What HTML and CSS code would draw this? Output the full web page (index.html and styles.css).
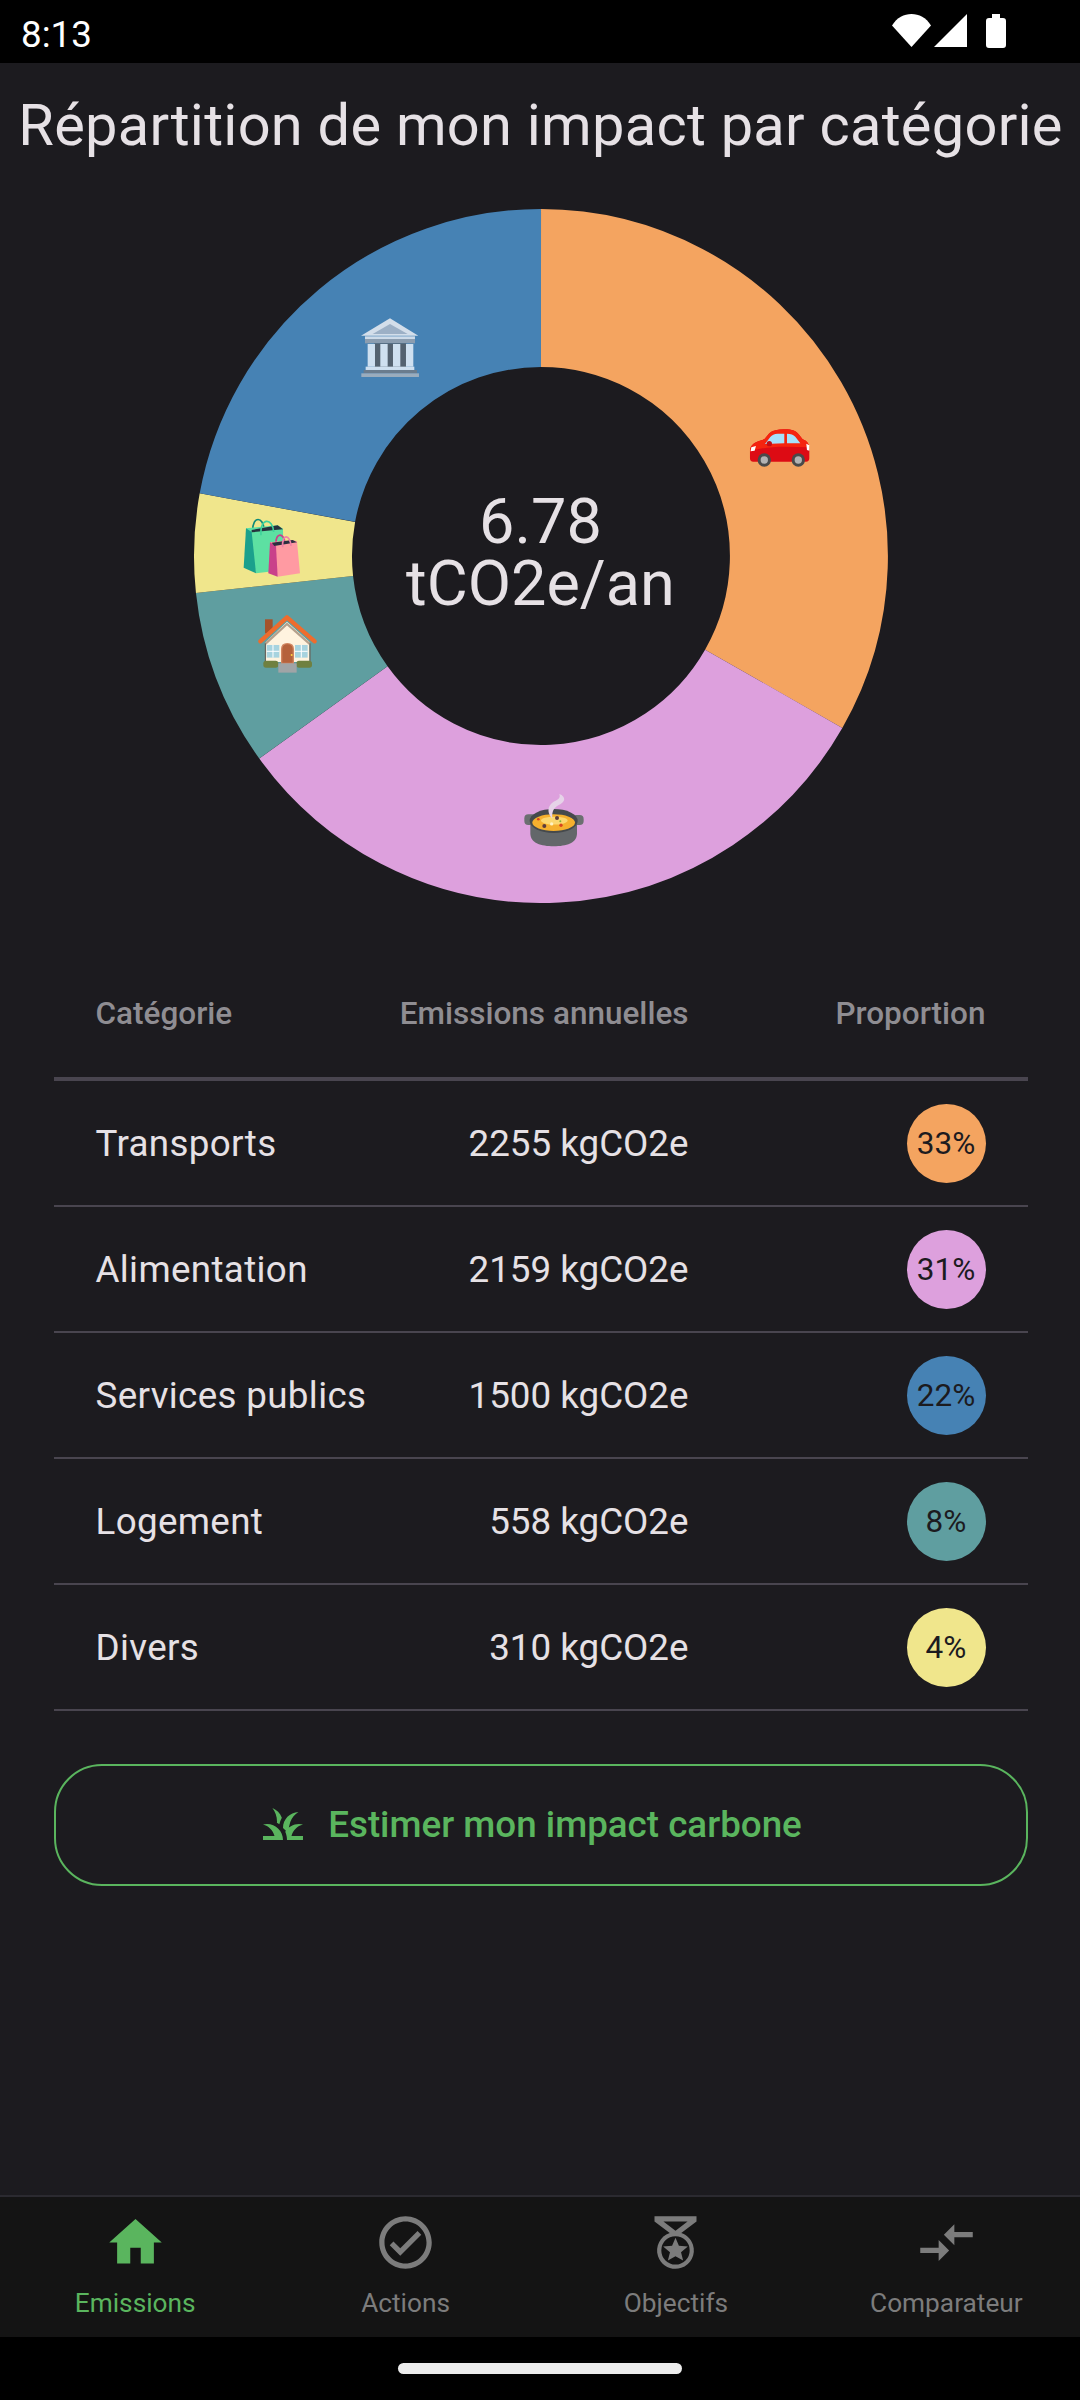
FILE: index.html
```html
<!DOCTYPE html>
<html lang="fr">
<head>
    <meta charset="UTF-8">
    <meta name="viewport" content="width=device-width, initial-scale=1.0">
    <title>Répartition de mon impact</title>
    <link rel="stylesheet" href="styles.css">
</head>
<body>
    <div class="status-bar">
        <span class="status-time">8:13</span>
        <div class="status-icons">
            <svg class="icon-wifi" width="39" height="33" viewBox="0 0 39 33"><path d="M0 11.5C5 3.5 12 0 19.5 0S34 3.5 39 11.5L19.5 33Z"/></svg>
            <svg class="icon-signal" width="33" height="33" viewBox="0 0 33 33"><path d="M33 0V33H0Z"/></svg>
            <svg class="icon-battery" width="20" height="34" viewBox="0 0 20 34"><path d="M6 0H14V4H17Q20 4 20 7V31Q20 34 17 34H3Q0 34 0 31V7Q0 4 3 4H6Z"/></svg>
        </div>
    </div>

    <main class="content">
        <h1 class="page-title">Répartition de mon impact par catégorie</h1>

        <div class="donut">
            <svg width="696" height="696" viewBox="0 0 696 696">
                <!-- une portion = un arc épais, du haut dans le sens horaire -->
                <g fill="none" stroke-width="158">
                    <path stroke="#f4a460" d="M348 80A268 268 0 0 1 580.7 480.8"/>
                    <path stroke="#dda0dd" d="M580.7 480.8A268 268 0 0 1 130.4 504.4"/>
                    <path stroke="#5f9ea0" d="M130.4 504.4A268 268 0 0 1 81.5 376.5"/>
                    <path stroke="#f0e68c" d="M81.5 376.5A268 268 0 0 1 84.4 299.6"/>
                    <path stroke="#4682b4" d="M84.4 299.6A268 268 0 0 1 348 80"/>
                </g>

                <!-- voiture -->
                <g transform="translate(298 192) scale(.3333)">
                    <path fill="#dd0b14" d="M777 150C778 135 790 125 820 118L835 100C845 91 860 88 880 88C905 88 915 92 925 105L935 118C950 122 955 135 955 150V175Q955 185 945 185H787Q777 185 777 175Z"/>
                    <path fill="#f5240f" d="M777 155C778 135 790 125 820 118L835 100C845 91 860 88 880 88C905 88 915 92 925 105L935 118C950 122 955 135 955 142L880 140C840 140 800 145 777 155Z"/>
                    <path fill="#a6e1fb" d="M822 132L838 111Q845 102 860 101H880V130ZM888 101Q905 101 913 110L928 130H888Z"/>
                    <circle cx="835" cy="131" r="8" fill="#c40d14"/>
                    <path fill="#fff" d="M781 142L795 138L791 152L779 154ZM946 131L955 136V152L948 150Z"/>
                    <circle cx="820" cy="180" r="20" fill="#4a4a4a"/>
                    <circle cx="820" cy="180" r="11" fill="#b3b3b3"/>
                    <circle cx="922" cy="180" r="20" fill="#4a4a4a"/>
                    <circle cx="922" cy="180" r="11" fill="#b3b3b3"/>
                </g>

                <!-- marmite -->
                <g transform="translate(298 192) scale(.3333)">
                    <rect x="100" y="1243" width="34" height="32" rx="12" fill="#6b6f70"/>
                    <rect x="244" y="1245" width="34" height="30" rx="12" fill="#6b6f70"/>
                    <path fill="#63676a" d="M118 1260V1300C118 1330 150 1339 188 1339S258 1330 258 1300V1260Z"/>
                    <ellipse cx="188" cy="1263" rx="72" ry="36" fill="#45494c"/>
                    <ellipse cx="188" cy="1268" rx="64" ry="25" fill="#f5b02e"/>
                    <ellipse cx="190" cy="1262" rx="40" ry="12" fill="#fbd870"/>
                    <circle cx="160" cy="1278" r="6" fill="#5b3b3b"/>
                    <circle cx="198" cy="1254" r="6" fill="#5b3b3b"/>
                    <circle cx="142" cy="1258" r="4" fill="#d8431f"/>
                    <circle cx="210" cy="1276" r="5" fill="#d8431f"/>
                    <circle cx="182" cy="1272" r="5" fill="#fff3c4"/>
                    <circle cx="208" cy="1264" r="3" fill="#7fb03c"/>
                    <path fill="#e6d3e8" d="M205 1182C226 1190 224 1206 202 1216C188 1223 182 1236 184 1256C171 1242 168 1226 180 1212C190 1200 212 1200 205 1182Z"/>
                </g>

                <!-- bâtiment public -->
                <g transform="translate(28 92) scale(.3333)">
                    <path fill="#d3deea" d="M507 55L592 107H420Z"/>
                    <path fill="#9cb0c6" d="M507 72L560 102H455Z"/>
                    <rect x="432" y="109" width="150" height="8" fill="#cddbe9"/>
                    <rect x="432" y="117" width="150" height="13" fill="#8b9db0"/>
                    <rect x="460" y="130" width="96" height="72" fill="#546270"/>
                    <rect x="440" y="132" width="22" height="68" fill="#cfe0f0"/>
                    <rect x="478" y="132" width="22" height="68" fill="#cfe0f0"/>
                    <rect x="516" y="132" width="22" height="68" fill="#cfe0f0"/>
                    <rect x="555" y="132" width="22" height="68" fill="#cfe0f0"/>
                    <rect x="434" y="200" width="146" height="10" fill="#cfe0f0"/>
                    <rect x="428" y="210" width="160" height="10" fill="#6a7c8e"/>
                    <rect x="421" y="220" width="173" height="11" fill="#9aacbd"/>
                </g>

                <!-- sacs -->
                <g transform="translate(28 92) scale(.3333)">
                    <path fill="none" stroke="#0e8a78" stroke-width="5" d="M95 692C95 646 127 650 129 688"/>
                    <path fill="#5de0a2" d="M75 685L170 676L186 686L188 810L105 820Z"/>
                    <path fill="#1ba08c" d="M75 685L92 696L105 820L68 803Z"/>
                    <path fill="#26333f" d="M92 690L170 676L186 688L92 697Z"/>
                    <path fill="none" stroke="#3fd39c" stroke-width="5" d="M120 706C116 650 156 654 158 696"/>
                    <path fill="none" stroke="#c9418a" stroke-width="5" d="M165 732C163 695 190 700 192 728"/>
                    <path fill="#ff9aa2" d="M147 727L215 720L228 724L237 820L170 830Z"/>
                    <path fill="#c9418a" d="M147 727L165 738L170 830L142 820Z"/>
                    <path fill="#2d2f40" d="M152 728L215 720L228 727L160 738Z"/>
                    <path fill="none" stroke="#f080a8" stroke-width="5" d="M185 742C182 698 208 704 210 738"/>
                </g>

                <!-- maison -->
                <g transform="translate(28 92) scale(.3333)">
                    <rect x="132" y="958" width="23" height="42" fill="#a5522a"/>
                    <path fill="#fff3df" d="M135 1025L198 965L265 1025V1086H135Z"/>
                    <path fill="none" stroke="#b5a08c" stroke-width="7" d="M133 1032L198 972L266 1032"/>
                    <path fill="none" stroke="#ee6c2d" stroke-width="13" stroke-linecap="round" stroke-linejoin="round" d="M118 1024L198 952L281 1024"/>
                    <path fill="none" stroke="#6a5a50" stroke-width="3" d="M133 1030V1086M267 1030V1086"/>
                    <rect x="137" y="1035" width="38" height="38" fill="#a7d3df"/>
                    <rect x="222" y="1035" width="38" height="38" fill="#a7d3df"/>
                    <path stroke="#fff" stroke-width="3" d="M156 1035V1073M137 1054H175M241 1035V1073M222 1054H260"/>
                    <path fill="#b5623c" stroke="#d18560" stroke-width="4" d="M182 1090V1048Q182 1031 199 1031Q217 1031 217 1048V1090Z"/>
                    <circle cx="212" cy="1065" r="3" fill="#ffd23f"/>
                    <rect x="127" y="1082" width="45" height="21" rx="8" fill="#6f8040"/>
                    <rect x="226" y="1082" width="47" height="21" rx="8" fill="#6f8040"/>
                    <rect x="172" y="1090" width="55" height="28" fill="#a0a4a6"/>
                </g>
            </svg>
            <div class="donut-label">6.78<br>tCO2e/an</div>
        </div>

        <div class="table">
            <div class="table-row table-head">
                <span>Catégorie</span>
                <span class="col-value">Emissions annuelles</span>
                <span class="col-share">Proportion</span>
            </div>
            <div class="table-row">
                <span class="col-name">Transports</span>
                <span class="col-value">2255 kgCO2e</span>
                <span class="col-share"><span class="badge badge-orange">33%</span></span>
            </div>
            <div class="table-row">
                <span class="col-name">Alimentation</span>
                <span class="col-value">2159 kgCO2e</span>
                <span class="col-share"><span class="badge badge-plum">31%</span></span>
            </div>
            <div class="table-row">
                <span class="col-name">Services publics</span>
                <span class="col-value">1500 kgCO2e</span>
                <span class="col-share"><span class="badge badge-blue">22%</span></span>
            </div>
            <div class="table-row">
                <span class="col-name">Logement</span>
                <span class="col-value">558 kgCO2e</span>
                <span class="col-share"><span class="badge badge-teal">8%</span></span>
            </div>
            <div class="table-row">
                <span class="col-name">Divers</span>
                <span class="col-value">310 kgCO2e</span>
                <span class="col-share"><span class="badge badge-yellow">4%</span></span>
            </div>
        </div>

        <button class="estimate-button">
            <svg width="48" height="48" viewBox="0 0 24 24" fill="currentColor"><path d="M12 20H2v-2h5.75C7.02 15.19 4.81 12.99 2 12.26 2.64 12.1 3.31 12 4 12c4.42 0 8 3.58 8 8zM22 12.26C21.36 12.1 20.69 12 20 12c-2.93 0-5.48 1.58-6.88 3.93.29.66.53 1.35.67 2.07.13.65.2 1.32.2 2h8v-2h-5.75c.73-2.81 2.94-5.01 5.75-5.74zM15.64 11.02c.78-2.09 2.23-3.84 4.09-5C15.44 6.16 12 9.67 12 14v.02c.95.75 1.77 1.66 2.4 2.69.28-2.02.69-3.91 1.24-5.69zM11.42 8.85C10.58 6.66 8.88 4.89 6.7 4 8.14 5.86 9 8.18 9 10.71c0 .21-.03.41-.04.61.43.24.83.52 1.22.82.21-1.18.65-2.29 1.24-3.29z"/></svg>
            <span>Estimer mon impact carbone</span>
        </button>
    </main>

    <nav class="bottom-nav">
        <div class="nav-item is-active">
            <svg width="63" height="63" viewBox="0 0 24 24" fill="currentColor"><path d="M10 20v-6h4v6h5v-8h3L12 3 2 12h3v8z"/></svg>
            <span>Emissions</span>
        </div>
        <div class="nav-item">
            <svg width="63" height="63" viewBox="0 0 24 24" fill="currentColor"><path d="M12 2C6.48 2 2 6.48 2 12s4.48 10 10 10 10-4.48 10-10S17.52 2 12 2zm0 18c-4.41 0-8-3.59-8-8s3.59-8 8-8 8 3.59 8 8-3.59 8-8 8zm-2-5.83L7.41 11.6 6 13l4 4 8-8-1.41-1.41z"/></svg>
            <span>Actions</span>
        </div>
        <div class="nav-item">
            <svg width="63" height="63" viewBox="0 0 24 24" fill="currentColor"><path fill-rule="evenodd" d="M20 2H4V4L9.81 8.36C6.14 9.57 4.14 13.53 5.35 17.2C6.56 20.87 10.5 22.87 14.19 21.66C17.86 20.45 19.86 16.5 18.65 12.82C17.95 10.71 16.3 9.05 14.19 8.36L20 4ZM7.4 4H16.6L12 7.5ZM12 9.6A5.4 5.4 0 1 0 12 20.4A5.4 5.4 0 1 0 12 9.6Z"/><path d="M14.9 18.9L12 17.2 9.1 18.9 9.9 15.7 7.3 13.5 10.7 13.2 12 10.2 13.3 13.2 16.7 13.5 14.1 15.7Z"/></svg>
            <span>Objectifs</span>
        </div>
        <div class="nav-item">
            <svg width="63" height="63" viewBox="0 0 24 24" fill="currentColor"><path d="M9.01 14H2v2h7.01v3L13 15l-3.99-4v3zm5.98-1v-3H22V8h-7.01V5L11 9l3.99 4z"/></svg>
            <span>Comparateur</span>
        </div>
    </nav>

    <div class="gesture-bar">
        <div class="gesture-pill"></div>
    </div>
</body>
</html>
```

FILE: styles.css
```css
* {
    box-sizing: border-box;
}

body {
    font-family: Roboto, "Noto Sans", sans-serif;
    display: flex;
    flex-direction: column;
    width: 1080px;
    height: 2400px;
    margin: 0;
    background-color: #1c1b1f;
    color: #e6e1e5;
}

.status-bar {
    display: flex;
    justify-content: space-between;
    align-items: flex-start;
    height: 63px;
    padding: 14px 74px 0 21px;
    background-color: #000;
    color: #fff;
}

.status-time {
    font-size: 36.75px;
    line-height: 41px;
}

.status-icons {
    display: flex;
    align-items: flex-start;
}

.status-icons svg {
    display: block;
    fill: #fff;
}

.icon-signal {
    margin-left: 3px;
}

.icon-battery {
    margin-left: 19px;
}

.content {
    flex: 1;
    display: flex;
    flex-direction: column;
    align-items: center;
    padding-left: 1px;
}

.page-title {
    margin: 28px 0 49px;
    font-size: 57.75px;
    font-weight: 400;
    line-height: 68px;
    letter-spacing: 0.27px;
    white-space: nowrap;
}

.donut {
    position: relative;
    width: 696px;
    height: 696px;
}

.donut svg {
    display: block;
}

.donut-label {
    position: absolute;
    inset: 0;
    display: flex;
    align-items: center;
    justify-content: center;
    padding-bottom: 7px;
    font-size: 63px;
    line-height: 62px;
    text-align: center;
}

.table {
    width: 974px;
    margin-top: 47px;
}

.table-row {
    display: grid;
    grid-template-columns: 280px 313px 1fr;
    align-items: center;
    height: 126px;
    padding: 0 42px;
    border-bottom: 2px solid #49454f;
    font-size: 36.75px;
}

.table-head {
    height: 130px;
    padding-bottom: 2px;
    border-bottom-width: 4px;
    color: #8f8d92;
    font-size: 31.5px;
    font-weight: 500;
}

.col-name {
    letter-spacing: 0.35px;
}

.col-value,
.col-share {
    text-align: right;
    white-space: nowrap;
}

.col-share {
    display: flex;
    justify-content: flex-end;
}

.badge {
    display: flex;
    align-items: center;
    justify-content: center;
    width: 79px;
    height: 79px;
    border-radius: 50%;
    color: #1c1b1f;
    font-size: 31.5px;
}

.badge-orange { background-color: #f4a460; }
.badge-plum { background-color: #dda0dd; }
.badge-blue { background-color: #4682b4; }
.badge-teal { background-color: #5f9ea0; }
.badge-yellow { background-color: #f0e68c; }

.estimate-button {
    display: flex;
    align-items: center;
    justify-content: center;
    gap: 21px;
    width: 974px;
    height: 122px;
    margin-top: 53px;
    padding: 0 20px 2px 0;
    border: 2px solid #5ab55e;
    border-radius: 48px;
    background: none;
    color: #5ab55e;
    font-family: inherit;
    font-size: 36.75px;
    font-weight: 500;
}

.bottom-nav {
    display: grid;
    grid-template-columns: repeat(4, 270.4px);
    height: 142px;
    border-top: 2px solid #2b2a30;
    background-color: #141414;
    color: #7c7c7c;
}

.nav-item {
    display: flex;
    flex-direction: column;
    align-items: center;
    padding-top: 14px;
    font-size: 26.25px;
    line-height: 30px;
}

.nav-item svg {
    display: block;
    margin-bottom: 14px;
}

.is-active {
    color: #5ab55e;
}

.gesture-bar {
    display: flex;
    justify-content: center;
    height: 63px;
    padding-top: 26px;
    background-color: #000;
}

.gesture-pill {
    width: 284px;
    height: 11px;
    border-radius: 6px;
    background-color: #ececec;
}
```
